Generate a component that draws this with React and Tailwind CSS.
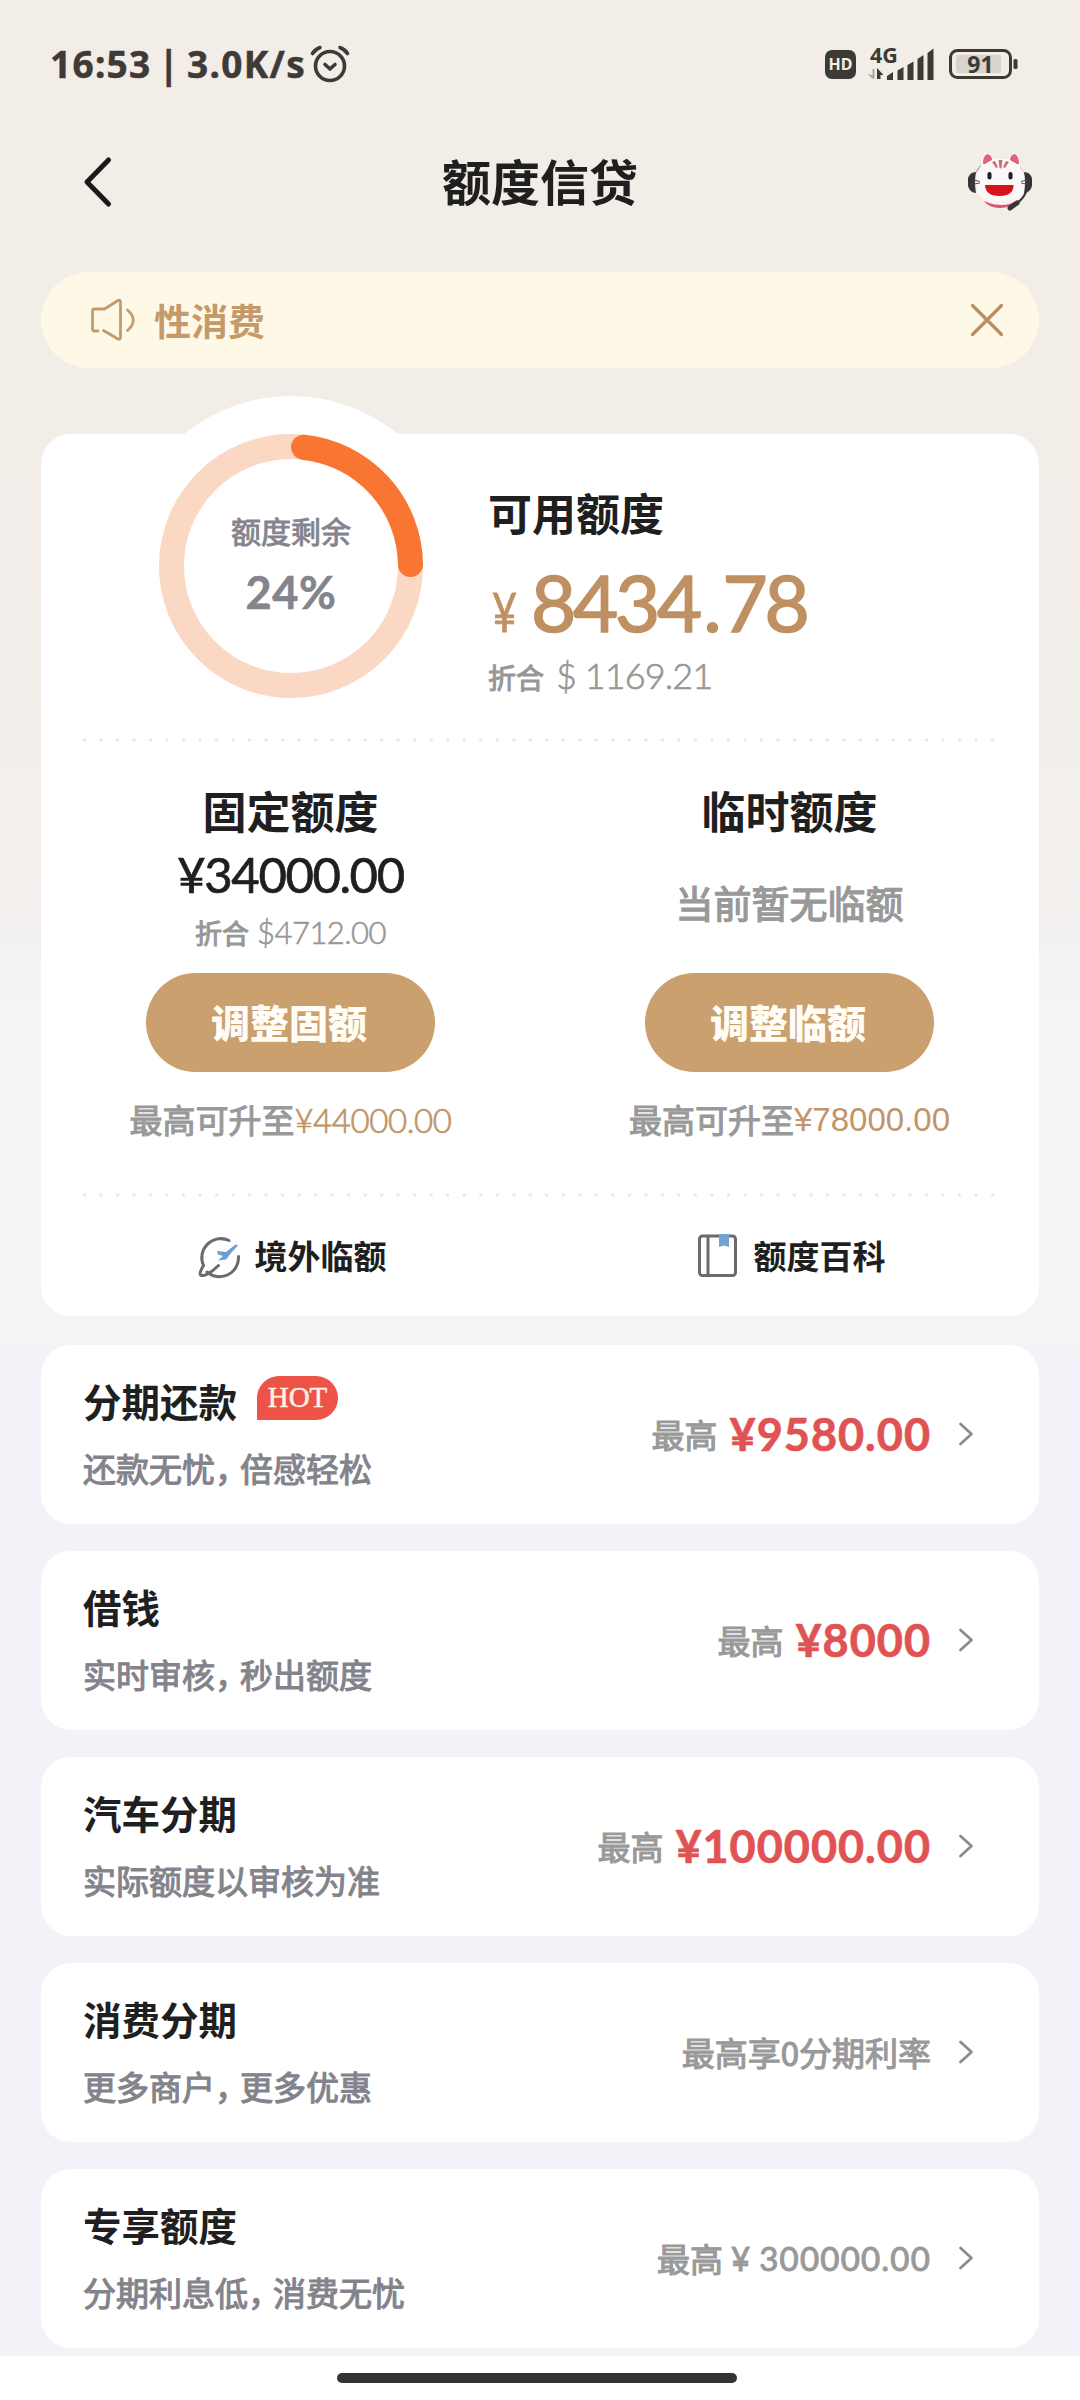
import clsx from "clsx";

const products = [
  { title: "分期还款", desc: ["还款无忧", "倍感轻松"], hot: true, label: "最高", amount: "¥9580.00" },
  { title: "借钱", desc: ["实时审核", "秒出额度"], label: "最高", amount: "¥8000" },
  { title: "汽车分期", desc: ["实际额度以审核为准"], label: "最高", amount: "¥100000.00" },
  { title: "消费分期", desc: ["更多商户", "更多优惠"], label: "最高享0分期利率" },
  { title: "专享额度", desc: ["分期利息低", "消费无忧"], label: "最高", greyAmount: "300000.00" },
];

function StatusBar() {
  return (
    <div className="flex h-[128px] items-center justify-between pl-[50px] pr-[62px] text-[#3f3a38]">
      <div className="flex items-center">
        <span className="whitespace-pre font-['Noto_Sans'] text-[37px] font-bold leading-[40px] tracking-[1.3px] [-webkit-text-stroke:0.5px]">
          16:53<span className="mx-[-4px]"> | </span>3.0K/s
        </span>
        <svg className="ml-[3px] h-[40px] w-[42px]" viewBox="0 0 42 40" fill="none" stroke="currentColor" strokeLinecap="round" strokeLinejoin="round">
          <circle cx="21" cy="22" r="14.5" strokeWidth="3.6" />
          <path d="M16 20.5l5 4.5 5-4.5" strokeWidth="3.6" />
          <path d="M3.500 9.500Q6 5.500 11 3.500M38.500 9.500Q36 5.500 31 3.500" strokeWidth="3.600" />
        </svg>
      </div>
      <div className="flex items-center">
        <div className="flex h-[29px] w-[31px] items-center justify-center rounded-[7px] bg-[#3d3935] font-['Noto_Sans'] text-[16px] font-bold leading-none text-[#f1ede7]">
          HD
        </div>
        <svg className="ml-[12px] h-[52px] w-[70px]" viewBox="0 -8 70 52">
          <text x="2" y="17" fontSize="21.500" fontWeight="700" fontFamily="Noto Sans" fill="#3d3935">4G</text>
          <path d="M4 32.500L0 28l4.500 1V23h2v9.500z" fill="#aaa6a2" />
          <path d="M9 33V22l6.500 7H12.500v4z" fill="#3d3935" />
          <path d="M19 30l6-4v8h-6zM29.500 24.500l6-3.500v13h-6zM39.500 19l6-3.500V34h-6zM49.500 13l6-4v25h-6zM59.500 7l6-4.500V34h-6z" fill="#3d3935" />
        </svg>
        <svg className="ml-[11px] h-[32px] w-[69px]" viewBox="0 0 69 32">
          <rect x="1.500" y="2.500" width="60" height="27" rx="7" fill="none" stroke="#3d3935" strokeWidth="3" />
          <rect x="7" y="7" width="45" height="18" rx="2" fill="#d8d3ce" />
          <rect x="64.500" y="11" width="4" height="10" rx="1.500" fill="#3d3935" />
          <text x="31.500" y="24.500" textAnchor="middle" fontSize="23" fontWeight="700" fontFamily="Noto Sans" fill="#3d3935">91</text>
        </svg>
      </div>
    </div>
  );
}

function Mascot() {
  return (
    <svg className="h-[64px] w-[64px]" viewBox="0 0 64 64">
      <path d="M8 22Q14 12 22 9M55 22Q50 13 42 9" fill="none" stroke="#8a8588" strokeWidth="1" />
      <path d="M12 24L14 7Q16 1 21 3l6 6h12l6-6q5-2 6 4l2 17z" fill="#fbf4f4" />
      <path d="M15 14q0-8 4-10 5 1 5 6l-7 4zM51 14q0-8-4-10-5 1-5 6l7 4z" fill="#dd6478" />
      <ellipse cx="33" cy="33" rx="25" ry="24" fill="#fdf8f8" />
      <path d="M16 51q17 5 32 0-5 7-16 7-11 0-16-7z" fill="#d9556b" />
      <path d="M13 47q19 9 39 0-6 8-19 8-14 0-20-8z" fill="#f9f0f0" />
      <path d="M30.500 10h4l-1 8q-1 1-2 0zM24 12l3-1 3 6-2 1zM41 12l-3-1-3 6 2 1z" fill="#c9707a" />
      <rect x="19.500" y="22" width="4" height="7.500" rx="2" fill="#1f1c20" />
      <rect x="40.500" y="22" width="4" height="7.500" rx="2" fill="#1f1c20" />
      <path d="M17 35h28.500q0 11-14 11T17 35z" fill="#d5131f" />
      <path d="M0 28q2-6 8-6-2 10 0 21-6 0-8-7zM64 28q-2-6-8-6 2 10 0 21 6 0 8-7z" fill="#38343a" />
      <path d="M6 30l6 1.500M6 34l6-1M59 30l-6 1.500M59 34l-6-1" stroke="#5a5458" strokeWidth="1" />
      <path d="M58 42Q55 49 49 53" fill="none" stroke="#38343a" strokeWidth="2" />
      <path d="M42 58l7-5" stroke="#38343a" strokeWidth="5" strokeLinecap="round" />
    </svg>
  );
}

function NavBar() {
  return (
    <div className="grid h-[108px] grid-cols-[1fr_auto_1fr] items-center pl-[80px] pr-[48px]">
      <svg className="h-[54px] w-[36px]" viewBox="0 0 36 54" fill="none">
        <path d="M28.500 5L7 27l21.500 22" stroke="#1c1a19" strokeWidth="5" strokeLinecap="round" strokeLinejoin="round" />
      </svg>
      <h1 className="mb-[5px] mr-[32px] text-[49px] font-bold leading-[60px] text-[#1f1f1f]">额度信贷</h1>
      <div className="flex justify-end">
        <Mascot />
      </div>
    </div>
  );
}

function Notice() {
  return (
    <div className="mx-[41px] mt-[36px] flex h-[96px] items-center rounded-full bg-[#fef8e7] pl-[49px] pr-[34px] text-[#c59a6b]">
      <svg className="h-[46px] w-[46px]" viewBox="0 0 46 46" fill="none" stroke="currentColor" strokeWidth="2.800" strokeLinecap="round" strokeLinejoin="round">
        <path d="M8 34H4.500Q2.500 34 2.500 32V14Q2.500 12 4.500 12H14.500L28 3.500Q30.500 2.500 30.500 5V40Q30.500 43 28 42L13.500 33.500" />
        <path d="M37.500 13Q49 23 37.500 33.500" />
      </svg>
      <span className="ml-[18px] flex-1 text-[37px] font-bold leading-[48px]">性消费</span>
      <svg className="h-[36px] w-[36px]" viewBox="0 0 36 36" fill="none" stroke="#bb8d62" strokeWidth="3.200" strokeLinecap="round">
        <path d="M3.500 3.500l29 29M32.500 3.500l-29 29" />
      </svg>
    </div>
  );
}

function Dots() {
  return (
    <svg className="ml-[41px] block h-[4px] w-[916px]" viewBox="0 0 916 4">
      <path d="M2.500 2H912" stroke="#e9e9e9" strokeWidth="3.400" strokeLinecap="round" strokeDasharray="0 16.510" />
    </svg>
  );
}

function Ring() {
  return (
    <div className="relative h-[264px] w-[264px]">
      <svg className="absolute inset-0 h-full w-full" viewBox="0 0 264 264" fill="none" strokeWidth="25">
        <circle cx="132" cy="132" r="119.500" stroke="#fad8c3" />
        <path d="M144.500 13.200A119.500 119.500 0 0 1 251.500 130.500" stroke="#f97532" strokeLinecap="round" />
      </svg>
      <div className="relative flex h-full flex-col items-center pt-[76px] text-[#84848e]">
        <span className="text-[30px] leading-[40px] [-webkit-text-stroke:0.9px]">额度剩余</span>
        <span className="mt-[15px] font-['Lato'] text-[45px] font-bold leading-[54px] tracking-[0.7px] [-webkit-text-stroke:0.6px]">24%</span>
      </div>
    </div>
  );
}

function Column({ title, button, max, maxClass, children }) {
  return (
    <div className="flex w-1/2 flex-col items-center">
      <h2 className="mt-[40px] text-[44px] font-bold leading-[56px] text-[#1f1f1f]">{title}</h2>
      <div className="flex h-[135px] flex-col items-center">{children}</div>
      <button className="h-[99px] w-[289px] rounded-full bg-[#cba06f] pb-[3px] pr-[3px] text-[39px] font-black leading-[50px] text-[#fffdf6]">
        {button}
      </button>
      <p className="mt-[24px] flex items-center leading-[44px]">
        <span className="text-[33px] text-[#999] [-webkit-text-stroke:1.1px]">最高可升至</span>
        <span className={clsx("pt-[2px] text-[33px] text-[#c1946a]", maxClass)}>{max}</span>
      </p>
    </div>
  );
}

function PlaneIcon() {
  return (
    <svg className="ml-[2px] mt-[2px] h-[44px] w-[44px]" viewBox="0 0 44 44" fill="none" strokeLinecap="round" strokeLinejoin="round">
      <path d="M32 5.500A19 19 0 0 0 6.500 30.500" stroke="#6b6b6b" strokeWidth="3" />
      <path d="M6.500 30.500Q1 39.500 4.500 40.500 10 41.500 21.500 30.500" stroke="#6b6b6b" strokeWidth="3" />
      <path d="M10 37A19 19 0 0 0 41.500 21.500" stroke="#6b6b6b" strokeWidth="3" />
      <path d="M20 16l9 1 9-7q3-1.500 2.500 1L34 18l-5 6.500-8 1 5-4.500-5-1.500z" fill="#6c9dcc" />
    </svg>
  );
}

function BookIcon() {
  return (
    <svg className="ml-[2px] mt-[1px] h-[44px] w-[44px]" viewBox="0 0 44 44" fill="none">
      <rect x="3.500" y="2" width="36" height="39.500" rx="3" stroke="#6b6b6b" strokeWidth="3" />
      <path d="M12 3v38" stroke="#6b6b6b" strokeWidth="3" />
      <path d="M23 0h10v13l-5-1.500-5 1.500z" fill="#74a2cf" />
    </svg>
  );
}

function QuotaCard() {
  return (
    <div className="relative mx-[41px] mt-[66px] h-[882px] rounded-[30px] bg-white">
      {/* white bump behind the ring */}
      <div className="absolute left-[80px] top-[-38px] h-[340px] w-[340px] rounded-full bg-white" />
      <div className="relative flex h-[304px] pl-[118px]">
        <Ring />
        <div className="ml-[65px] flex flex-col pt-[50px]">
          <span className="text-[44px] font-bold leading-[56px] text-[#1f1f1f]">可用额度</span>
          <div className="mt-[21px] flex items-baseline font-['Lato'] text-[#bf9062]">
            <span className="w-[43px] origin-left scale-x-80 pl-[5px] text-[54px] leading-[82px] [-webkit-text-stroke:0.8px]">¥</span>
            <span className="text-[78px] leading-[82px] tracking-[-3.2px] [-webkit-text-stroke:1.6px]">
              8434<span className="mx-[4px]">.</span>78
            </span>
          </div>
          <div className="-mt-[6px] flex items-baseline text-[#979797]">
            <span className="text-[28px] leading-[56px] [-webkit-text-stroke:1px]">折合</span>
            <span className="ml-[12px] whitespace-pre font-['Lato'] text-[36px] font-light leading-[56px] tracking-[-0.9px] [-webkit-text-stroke:0.7px]">$ 1169.21</span>
          </div>
        </div>
      </div>
      <Dots />
      <div className="flex h-[451px]">
        <Column title="固定额度" button="调整固额" max="¥44000.00" maxClass="font-['Lato'] font-light tracking-[-0.4px] [-webkit-text-stroke:0.7px]">
          <span className="mt-[8px] font-['Lato'] text-[49px] leading-[56px] tracking-[-1.4px] text-[#1f1f1f] [-webkit-text-stroke:0.7px]">¥34000.00</span>
          <span className="mt-[8px] flex items-baseline text-[#979797]">
            <span className="text-[27px] leading-[44px] [-webkit-text-stroke:1px]">折合</span>
            <span className="ml-[8px] font-['Lato'] text-[31px] font-light leading-[44px] tracking-[-0.5px] [-webkit-text-stroke:0.6px]">$4712.00</span>
          </span>
        </Column>
        <Column title="临时额度" button="调整临额" max="¥78000.00" maxClass="font-['Liberation_Sans']">
          <span className="mt-[39px] text-[38px] leading-[50px] text-[#999] [-webkit-text-stroke:1.3px]">当前暂无临额</span>
        </Column>
      </div>
      <Dots />
      <div className="flex h-[119px] pt-[36px] text-[33px] font-bold leading-[44px] text-[#1f1f1f]">
        <div className="flex w-1/2 justify-center gap-[14px]">
          <PlaneIcon />
          境外临额
        </div>
        <div className="flex w-1/2 justify-center gap-[14px]">
          <BookIcon />
          额度百科
        </div>
      </div>
    </div>
  );
}

function ProductRow({ title, desc, hot, label, amount, greyAmount }) {
  return (
    <div className="flex h-[179px] items-center justify-between rounded-[30px] bg-white pl-[42px] pr-[63px]">
      <div className="mb-[4px] flex flex-col">
        <div className="flex h-[52px] items-center">
          <h3 className="mb-[3px] text-[38.5px] font-bold leading-[52px] text-[#1f1f1f]">{title}</h3>
          {hot && (
            <span className="mb-[8px] ml-[20px] h-[44px] w-[81px] rounded-[22px] rounded-bl-none bg-[#ee5348] text-center font-['Liberation_Serif'] text-[29px] leading-[43px] text-[#fff3e6] [-webkit-text-stroke:0.5px]">
              HOT
            </span>
          )}
        </div>
        <p className="mt-[18px] flex text-[33px] leading-[44px] text-[#83838c] [-webkit-text-stroke:1.1px]">
          {desc[0]}
          {desc[1] && <span className="w-[25px] [font-feature-settings:'halt']">，</span>}
          {desc[1]}
        </p>
      </div>
      <div className="mb-[2px] flex items-center">
        <span className="text-[33px] leading-[48px] text-[#999] [-webkit-text-stroke:1.1px]">{label}</span>
        {amount && (
          <span className="ml-[12px] font-['Lato'] text-[45px] font-bold leading-[48px] tracking-[1px] text-[#e05354] [-webkit-text-stroke:0.7px]">{amount}</span>
        )}
        {greyAmount && (
          <span className="ml-[8px] flex gap-[8px] font-['Lato'] text-[33px] leading-[48px] tracking-[1.2px] text-[#999] [-webkit-text-stroke:1px]">
            <span>¥</span>
            <span>{greyAmount}</span>
          </span>
        )}
        <svg className="ml-[25px] h-[28px] w-[20px]" viewBox="0 0 20 28" fill="none">
          <path d="M4.500 4l11 10-11 10" stroke="#8c8c8c" strokeWidth="2.800" strokeLinecap="round" strokeLinejoin="round" />
        </svg>
      </div>
    </div>
  );
}

export default function App() {
  return (
    <div className="h-[2400px] w-[1080px] overflow-hidden bg-[#f2f3f9] font-['Noto_Sans_CJK_SC',sans-serif]">
      <div className="h-[1345px] bg-linear-to-b from-[#f2ede7] from-30% via-[#f3efed] via-65% to-[#f4f4f4] to-75%">
        <StatusBar />
        <NavBar />
        <Notice />
        <QuotaCard />
      </div>
      <div className="mx-[41px] flex h-[1011px] flex-col gap-[27px]">
        {products.map((p) => (
          <ProductRow key={p.title} {...p} />
        ))}
      </div>
      <div className="flex h-[44px] justify-center bg-white pt-[17px]">
        <div className="mr-[7px] h-[10px] w-[400px] rounded-full bg-[#333]" />
      </div>
    </div>
  );
}
